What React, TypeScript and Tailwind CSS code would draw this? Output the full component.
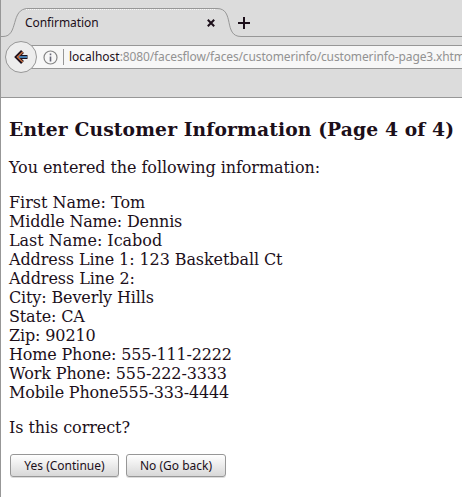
const details: [string, string][] = [
  ['First Name: Tom', 'tracking-[-0.02px]'],
  ['Middle Name: Dennis', 'tracking-[-0.18px]'],
  ['Last Name: Icabod', 'tracking-[-0.02px]'],
  ['Address Line 1: 123 Basketball Ct', 'tracking-[-0.09px]'],
  ['Address Line 2:', 'tracking-[-0.06px]'],
  ['City: Beverly Hills', 'tracking-[-0.14px]'],
  ['State: CA', 'tracking-[-0.16px]'],
  ['Zip: 90210', 'tracking-[-0.13px]'],
  ['Home Phone: 555-111-2222', 'tracking-[-0.17px]'],
  ['Work Phone: 555-222-3333', 'tracking-[-0.13px]'],
  ['Mobile Phone555-333-4444', 'tracking-[-0.17px]'],
];

function TabStrip() {
  return (
    <div className="relative flex h-[37px] items-start">
      <svg className="absolute inset-0" width="461" height="37" viewBox="0 0 461 37" fill="none">
        <path
          d="M0 36.5H2C18 36.5 9 8.5 27 8.5H216C234 8.5 222 36.5 240 36.5H461"
          stroke="#979797"
        />
        <path d="M25 9.5H214" stroke="#f8f8f8" strokeDasharray="1 1" />
      </svg>
      <div className="relative flex h-[37px] w-[232px] items-center justify-between pt-[9px] pl-[24px] pr-[18px]">
        <span className="text-[12px] leading-4 tracking-[-0.08px]">Confirmation</span>
        <svg width="8" height="8" viewBox="0 0 8 8" stroke="#1c0f1a" strokeWidth="2">
          <path d="M.8.8l6.4 6.4M7.2.8L.8 7.2" />
        </svg>
      </div>
      <svg className="relative mt-[17px] ml-[5px]" width="12" height="12" viewBox="0 0 12 12" stroke="#1c0f1a" strokeWidth="2">
        <path d="M6 0v12M0 6h12" />
      </svg>
    </div>
  );
}

function AddressBar() {
  return (
    <div className="flex h-[61px] items-start border-b border-[#979797] pt-[4px]">
      <div className="z-10 ml-1 flex size-8 shrink-0 items-center justify-center rounded-full border border-[#979797] bg-[#ededed]">
        <svg width="14" height="14" viewBox="0 0 14 14" fill="none">
          <path d="M8.5 1.500L3 7l5.500 5.500M4 7h9.500" stroke="#1c0f1a" strokeWidth="4" />
          <path d="M8.800 2L3.500 7l5.300 5" stroke="#c66f43" strokeWidth="1.500" />
          <path d="M5 7h8" stroke="#4a8cc4" strokeWidth="1.800" />
        </svg>
      </div>
      <div className="mt-[4px] -ml-[6px] flex h-6 flex-1 items-center overflow-hidden border-y border-[#979797] bg-[#f7f7f7] pl-[12px]">
        <svg className="shrink-0" width="15" height="15" viewBox="0 0 15 15" fill="none">
          <circle cx="7.500" cy="7.500" r="6.500" stroke="#858585" strokeWidth="1.200" />
          <path d="M7.500 6.500v5M7.500 3.500v1.700" stroke="#686878" strokeWidth="1.600" />
        </svg>
        <div className="ml-[5px] h-4 w-px shrink-0 bg-[#979797]" />
        <span className="ml-[5px] whitespace-nowrap text-[12px] leading-4 tracking-[-0.13px] text-[#929292]">
          <span className="tracking-normal text-[#1c0f1a]">localhost</span>:8080/facesflow/faces/customerinfo/customerinfo-page3.xhtml
        </span>
      </div>
    </div>
  );
}

function FormButton({ label, width }: { label: string; width: string }) {
  return (
    <button
      className={`h-[23px] rounded-[3px] border border-[#979797] bg-linear-to-b from-white to-[#d8d8d8] font-['Noto_Sans',sans-serif] text-[12px] leading-4 shadow-[0_1px_0_#dcdcdc] ${width}`}
    >
      {label}
    </button>
  );
}

export default function App() {
  return (
    <div className="h-[497px] w-[462px] overflow-hidden border-l border-[#979797] bg-white text-[#1c0f1a]">
      <header className="bg-[#dcdcdc] font-['Noto_Sans',sans-serif]">
        <TabStrip />
        <AddressBar />
      </header>
      <main className="pl-2 font-['DejaVu_Serif',serif] text-[16px] leading-[19px]">
        <h3 className="mt-[20px] text-[18.72px] leading-[22px] font-bold tracking-[0.12px] whitespace-nowrap">
          Enter Customer Information (Page 4 of 4)
        </h3>
        <p className="mt-[18px] tracking-[-0.07px]">You entered the following information:</p>
        <div className="mt-4">
          {details.map(([line, tracking]) => (
            <div key={line} className={tracking}>{line}</div>
          ))}
        </div>
        <p className="mt-4 tracking-[-0.07px]">Is this correct?</p>
        <div className="mt-[17px] ml-px flex gap-[7px]">
          <FormButton label="Yes (Continue)" width="w-[109px]" />
          <FormButton label="No (Go back)" width="w-[100px]" />
        </div>
      </main>
    </div>
  );
}
